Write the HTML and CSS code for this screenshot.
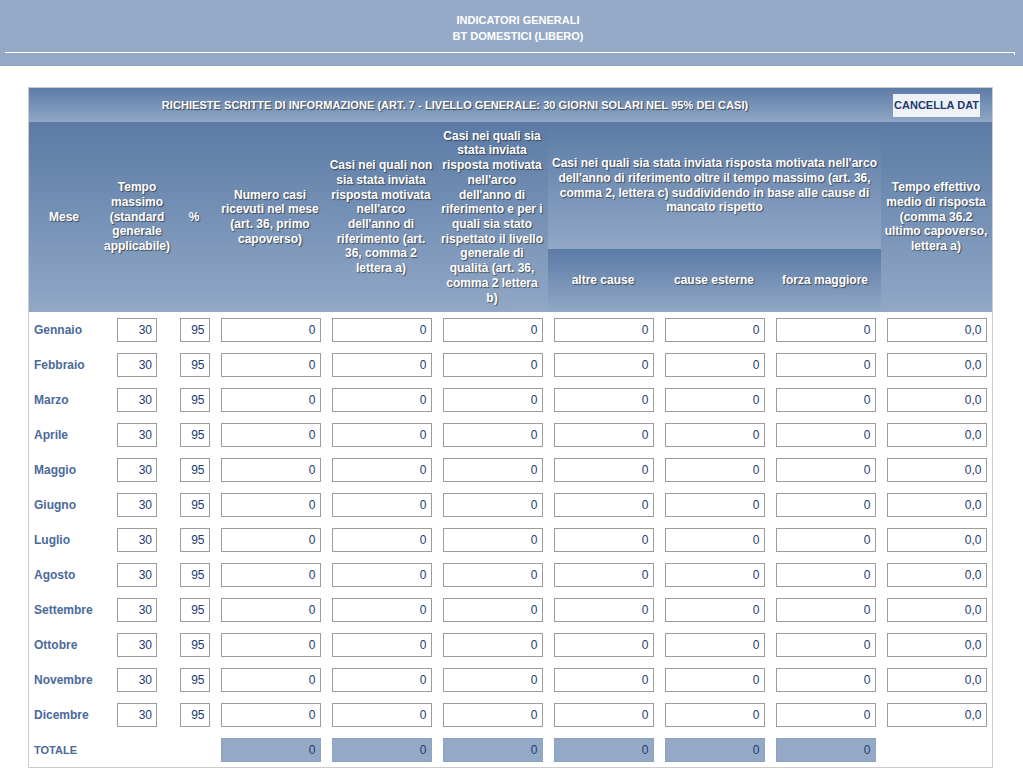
FILE: index.html
```html
<!DOCTYPE html>
<html lang="it">
<head>
<meta charset="utf-8">
<title>Indicatori generali</title>
<link rel="stylesheet" href="styles.css">
</head>
<body>
<div class="banner">
  <div class="banner-title">INDICATORI GENERALI<br>BT DOMESTICI (LIBERO)</div>
  <div class="rule"></div>
</div>
<div class="box">
<table class="grid">
  <colgroup>
    <col class="c-mese"><col class="c-tempo"><col class="c-pct">
    <col class="c-std"><col class="c-std"><col class="c-std"><col class="c-std"><col class="c-std"><col class="c-std"><col class="c-std">
  </colgroup>
  <tr class="title-row">
    <td colspan="9" class="title-cell">RICHIESTE SCRITTE DI INFORMAZIONE (ART. 7 - LIVELLO GENERALE: 30 GIORNI SOLARI NEL 95% DEI CASI)</td>
    <td class="btn-cell"><button class="btn" type="button">CANCELLA DAT</button></td>
  </tr>
  <tr class="hr1">
    <th rowspan="2">Mese</th>
    <th rowspan="2" class="th-tempo">Tempo massimo (standard generale applicabile)</th>
    <th rowspan="2">%</th>
    <th rowspan="2">Numero casi ricevuti nel mese (art. 36, primo capoverso)</th>
    <th rowspan="2">Casi nei quali non sia stata inviata risposta motivata nell'arco dell'anno di riferimento (art. 36, comma 2 lettera a)</th>
    <th rowspan="2">Casi nei quali sia stata inviata risposta motivata nell'arco dell'anno di riferimento e per i quali sia stato rispettato il livello generale di qualità (art. 36, comma 2 lettera b)</th>
    <th colspan="3" class="th-wide">Casi nei quali sia stata inviata risposta motivata nell'arco dell'anno di riferimento oltre il tempo massimo (art. 36, comma 2, lettera c) suddividendo in base alle cause di mancato rispetto</th>
    <th rowspan="2">Tempo effettivo medio di risposta (comma 36.2 ultimo capoverso, lettera a)</th>
  </tr>
  <tr class="hr2">
    <th>altre cause</th>
    <th>cause esterne</th>
    <th>forza maggiore</th>
  </tr>
  <tr><td class="mese">Gennaio</td><td><input class="in in-t" value="30" readonly></td><td><input class="in in-p" value="95" readonly></td><td><input class="in" value="0" readonly></td><td><input class="in" value="0" readonly></td><td><input class="in" value="0" readonly></td><td><input class="in" value="0" readonly></td><td><input class="in" value="0" readonly></td><td><input class="in" value="0" readonly></td><td><input class="in" value="0,0" readonly></td></tr>
  <tr><td class="mese">Febbraio</td><td><input class="in in-t" value="30" readonly></td><td><input class="in in-p" value="95" readonly></td><td><input class="in" value="0" readonly></td><td><input class="in" value="0" readonly></td><td><input class="in" value="0" readonly></td><td><input class="in" value="0" readonly></td><td><input class="in" value="0" readonly></td><td><input class="in" value="0" readonly></td><td><input class="in" value="0,0" readonly></td></tr>
  <tr><td class="mese">Marzo</td><td><input class="in in-t" value="30" readonly></td><td><input class="in in-p" value="95" readonly></td><td><input class="in" value="0" readonly></td><td><input class="in" value="0" readonly></td><td><input class="in" value="0" readonly></td><td><input class="in" value="0" readonly></td><td><input class="in" value="0" readonly></td><td><input class="in" value="0" readonly></td><td><input class="in" value="0,0" readonly></td></tr>
  <tr><td class="mese">Aprile</td><td><input class="in in-t" value="30" readonly></td><td><input class="in in-p" value="95" readonly></td><td><input class="in" value="0" readonly></td><td><input class="in" value="0" readonly></td><td><input class="in" value="0" readonly></td><td><input class="in" value="0" readonly></td><td><input class="in" value="0" readonly></td><td><input class="in" value="0" readonly></td><td><input class="in" value="0,0" readonly></td></tr>
  <tr><td class="mese">Maggio</td><td><input class="in in-t" value="30" readonly></td><td><input class="in in-p" value="95" readonly></td><td><input class="in" value="0" readonly></td><td><input class="in" value="0" readonly></td><td><input class="in" value="0" readonly></td><td><input class="in" value="0" readonly></td><td><input class="in" value="0" readonly></td><td><input class="in" value="0" readonly></td><td><input class="in" value="0,0" readonly></td></tr>
  <tr><td class="mese">Giugno</td><td><input class="in in-t" value="30" readonly></td><td><input class="in in-p" value="95" readonly></td><td><input class="in" value="0" readonly></td><td><input class="in" value="0" readonly></td><td><input class="in" value="0" readonly></td><td><input class="in" value="0" readonly></td><td><input class="in" value="0" readonly></td><td><input class="in" value="0" readonly></td><td><input class="in" value="0,0" readonly></td></tr>
  <tr><td class="mese">Luglio</td><td><input class="in in-t" value="30" readonly></td><td><input class="in in-p" value="95" readonly></td><td><input class="in" value="0" readonly></td><td><input class="in" value="0" readonly></td><td><input class="in" value="0" readonly></td><td><input class="in" value="0" readonly></td><td><input class="in" value="0" readonly></td><td><input class="in" value="0" readonly></td><td><input class="in" value="0,0" readonly></td></tr>
  <tr><td class="mese">Agosto</td><td><input class="in in-t" value="30" readonly></td><td><input class="in in-p" value="95" readonly></td><td><input class="in" value="0" readonly></td><td><input class="in" value="0" readonly></td><td><input class="in" value="0" readonly></td><td><input class="in" value="0" readonly></td><td><input class="in" value="0" readonly></td><td><input class="in" value="0" readonly></td><td><input class="in" value="0,0" readonly></td></tr>
  <tr><td class="mese">Settembre</td><td><input class="in in-t" value="30" readonly></td><td><input class="in in-p" value="95" readonly></td><td><input class="in" value="0" readonly></td><td><input class="in" value="0" readonly></td><td><input class="in" value="0" readonly></td><td><input class="in" value="0" readonly></td><td><input class="in" value="0" readonly></td><td><input class="in" value="0" readonly></td><td><input class="in" value="0,0" readonly></td></tr>
  <tr><td class="mese">Ottobre</td><td><input class="in in-t" value="30" readonly></td><td><input class="in in-p" value="95" readonly></td><td><input class="in" value="0" readonly></td><td><input class="in" value="0" readonly></td><td><input class="in" value="0" readonly></td><td><input class="in" value="0" readonly></td><td><input class="in" value="0" readonly></td><td><input class="in" value="0" readonly></td><td><input class="in" value="0,0" readonly></td></tr>
  <tr><td class="mese">Novembre</td><td><input class="in in-t" value="30" readonly></td><td><input class="in in-p" value="95" readonly></td><td><input class="in" value="0" readonly></td><td><input class="in" value="0" readonly></td><td><input class="in" value="0" readonly></td><td><input class="in" value="0" readonly></td><td><input class="in" value="0" readonly></td><td><input class="in" value="0" readonly></td><td><input class="in" value="0,0" readonly></td></tr>
  <tr><td class="mese">Dicembre</td><td><input class="in in-t" value="30" readonly></td><td><input class="in in-p" value="95" readonly></td><td><input class="in" value="0" readonly></td><td><input class="in" value="0" readonly></td><td><input class="in" value="0" readonly></td><td><input class="in" value="0" readonly></td><td><input class="in" value="0" readonly></td><td><input class="in" value="0" readonly></td><td><input class="in" value="0,0" readonly></td></tr>
  <tr><td class="mese totale">TOTALE</td><td></td><td></td><td><input class="in tot" value="0" readonly></td><td><input class="in tot" value="0" readonly></td><td><input class="in tot" value="0" readonly></td><td><input class="in tot" value="0" readonly></td><td><input class="in tot" value="0" readonly></td><td><input class="in tot" value="0" readonly></td><td></td></tr>
</table>
</div>
</body>
</html>
```
FILE: styles.css
```css
html, body {
  margin: 0;
  padding: 0;
  background: #ffffff;
  font-family: "Liberation Sans", Arial, sans-serif;
}

.banner {
  height: 66px;
  background: #93a9c6;
  padding-top: 12px;
  box-sizing: border-box;
}

.banner-title {
  color: #ffffff;
  font-size: 11px;
  font-weight: bold;
  line-height: 16px;
  text-align: center;
  padding-left: 13px;
}

.rule {
  margin: 8px 8px 0 5px;
  height: 2px;
  border-top: 1px solid #ffffff;
  border-right: 1px solid #ffffff;
}

.box {
  margin: 21px 0 0 28px;
  width: 963px;
  border: 1px solid #cbcbcb;
}

.grid {
  width: 963px;
  table-layout: fixed;
  border-collapse: collapse;
  border-spacing: 0;
}

.c-mese { width: 71px; }
.c-tempo { width: 74px; }
.c-pct { width: 41px; }
.c-std { width: 111px; }

.grid td, .grid th {
  padding: 0;
}

.title-row { height: 34px; }

.title-row td {
  background: linear-gradient(to bottom, #5d7ca6, #90a7c5);
}

.title-cell {
  color: #ffffff;
  font-size: 11px;
  font-weight: bold;
  text-align: center;
  letter-spacing: 0.05px;
  text-shadow: 1px 1px 1px rgba(0, 0, 0, 0.55);
}

.btn-cell {
  text-align: center;
}

.btn {
  width: 87px;
  height: 23px;
  padding: 0;
  border: 0;
  background: #eef2f8;
  color: #1e3a6e;
  font-family: "Liberation Sans", Arial, sans-serif;
  font-size: 11px;
  font-weight: bold;
  text-align: center;
  white-space: nowrap;
  vertical-align: middle;
}

.hr1 { height: 127px; }
.hr2 { height: 63px; }

.grid th {
  background: linear-gradient(to bottom, #5b7aa5, #91a8c6);
  color: #ffffff;
  font-size: 12px;
  font-weight: bold;
  line-height: 14.7px;
  text-align: center;
  vertical-align: middle;
  padding: 0 4px 0 3px;
  text-shadow: 1px 1px 1px rgba(0, 0, 0, 0.5);
}

.grid th.th-tempo {
  padding: 0 2px;
}

.grid th.th-wide {
  padding: 0 2px;
}

.grid tr td {
  height: 35px;
  text-align: center;
  vertical-align: middle;
}

.grid .title-row td {
  height: 34px;
}

.grid td.mese {
  text-align: left;
  padding-left: 5px;
  color: #4a6a9b;
  font-size: 12px;
  font-weight: bold;
}

.grid td.totale {
  font-size: 11px;
}

.in {
  box-sizing: border-box;
  width: 100px;
  height: 24px;
  margin: 0;
  border: 1px solid #9c9c9c;
  padding: 0 4px 0 2px;
  background: #ffffff;
  color: #1d3b6f;
  font-family: "Liberation Sans", Arial, sans-serif;
  font-size: 12px;
  text-align: right;
  vertical-align: middle;
  outline: none;
}

.in-t { width: 40px; }
.in-p { width: 30px; }

.in.tot {
  background: #93a9c6;
  border-color: #8ca2c0;
}
```
